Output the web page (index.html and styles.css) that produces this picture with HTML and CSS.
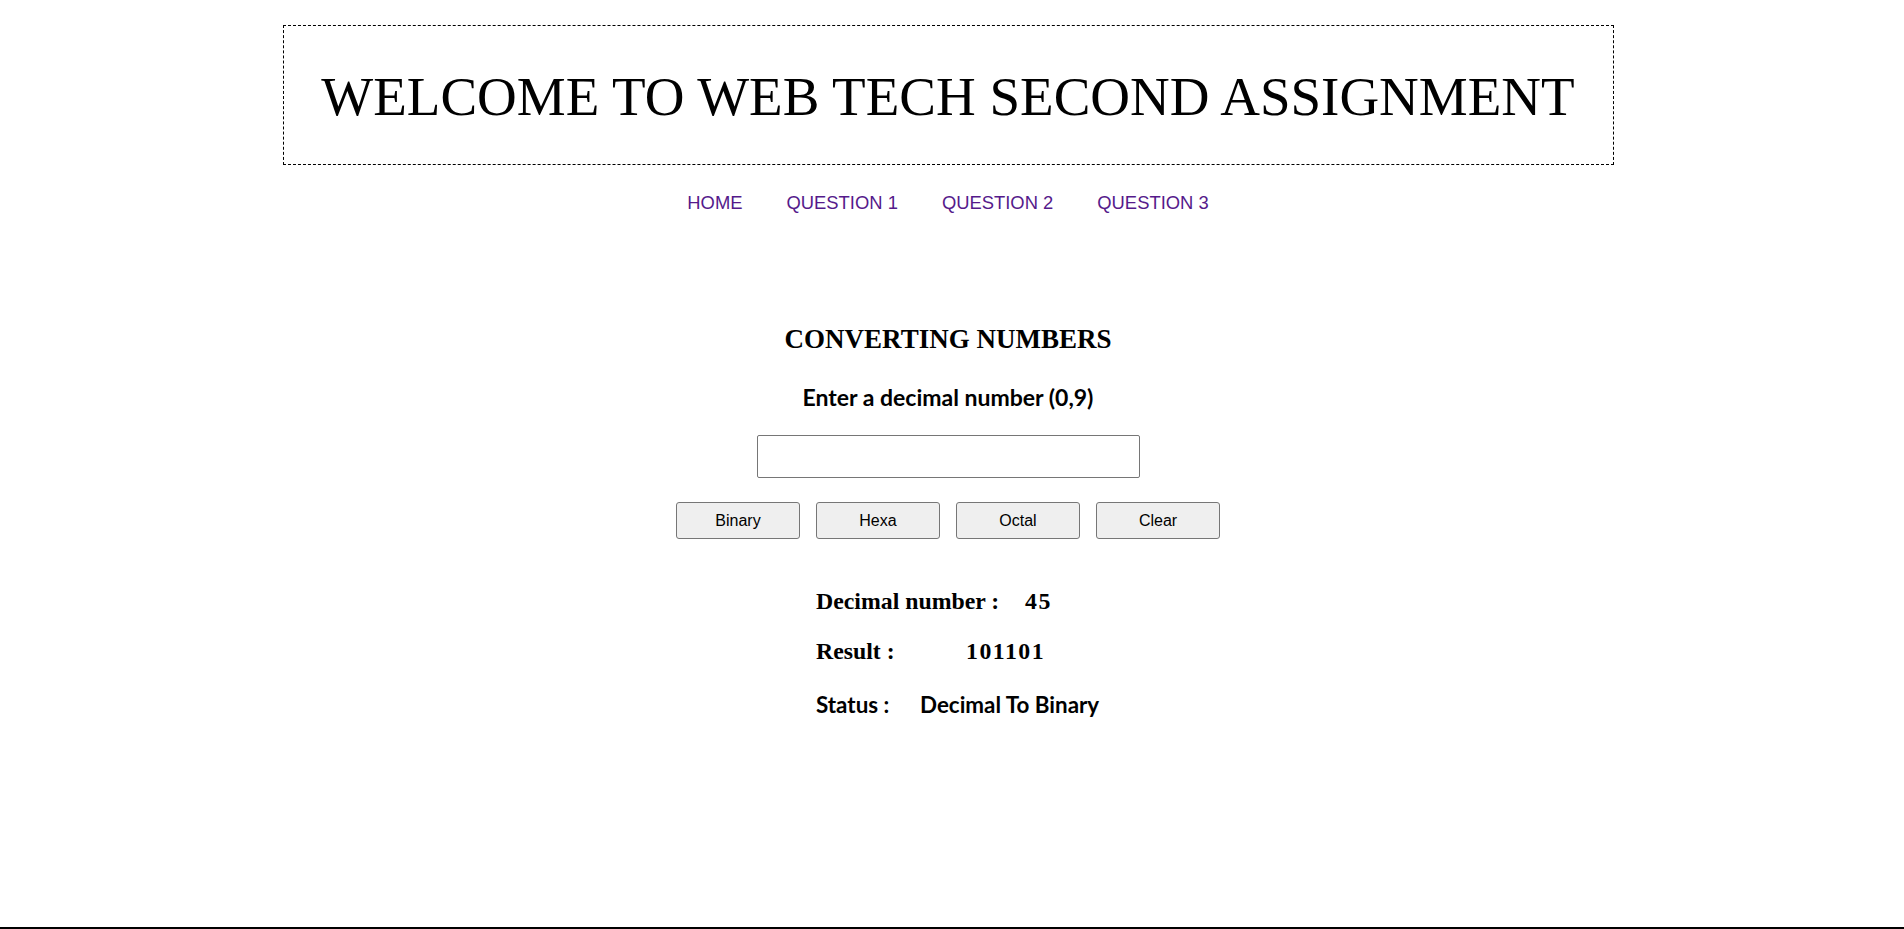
FILE: index.html
```html
<!DOCTYPE html>
<html lang="en">
<head>
<meta charset="utf-8">
<title>Web Tech Second Assignment</title>
<link rel="stylesheet" href="styles.css">
</head>
<body>
<div class="page">
  <header class="title-box">
    <h1 class="title">WELCOME TO WEB TECH SECOND ASSIGNMENT</h1>
  </header>
  <nav class="nav">
    <a href="#" class="nav-link">HOME</a>
    <a href="#" class="nav-link">QUESTION 1</a>
    <a href="#" class="nav-link">QUESTION 2</a>
    <a href="#" class="nav-link">QUESTION 3</a>
  </nav>
  <main class="converter">
    <h2 class="conv-title">CONVERTING NUMBERS</h2>
    <p class="prompt">Enter a decimal number (0,9)</p>
    <input type="text" class="num-input">
    <div class="buttons">
      <button class="btn">Binary</button>
      <button class="btn">Hexa</button>
      <button class="btn">Octal</button>
      <button class="btn">Clear</button>
    </div>
    <div class="results">
      <div class="row row-serif"><span class="lbl lbl-dec">Decimal number :</span><span class="val">45</span></div>
      <div class="row row-serif"><span class="lbl lbl-res">Result :</span><span class="val">101101</span></div>
      <div class="row row-sans"><span class="lbl lbl-status">Status :</span><span class="val-sans">Decimal To Binary</span></div>
    </div>
  </main>
</div>
<footer class="footer"></footer>
</body>
</html>
```
FILE: styles.css
```css
html, body {
  margin: 0;
  padding: 0;
  background: #fff;
  color: #000;
}
body {
  font-family: "Liberation Serif", "Times New Roman", serif;
}
.page {
  padding: 25px 8px 0 0;
}
.title-box {
  box-sizing: border-box;
  width: 1331px;
  height: 140px;
  margin: 0 auto;
  border: 1px dashed #000;
  padding-top: 43px;
  text-align: center;
}
.title {
  margin: 0;
  font-family: "Liberation Serif", serif;
  font-weight: normal;
  font-size: 55px;
  line-height: 55px;
  white-space: nowrap;
}
.nav {
  display: flex;
  justify-content: center;
  gap: 44px;
  margin-top: 27px;
  line-height: 22px;
}
.nav-link {
  font-family: "Liberation Sans", Arial, sans-serif;
  font-size: 18.4px;
  color: #551a8b;
  text-decoration: none;
}
.converter {
  display: flex;
  flex-direction: column;
  align-items: center;
  margin-top: 109px;
}
.conv-title {
  margin: 0;
  font-family: "Liberation Serif", serif;
  font-weight: bold;
  font-size: 27px;
  line-height: 32px;
}
.prompt {
  margin: 30px 0 0;
  font-family: Lato, "Open Sans", sans-serif;
  font-weight: bold;
  font-size: 23px;
  line-height: 24px;
}
.num-input {
  box-sizing: border-box;
  width: 383px;
  height: 43px;
  margin-top: 26px;
  border: 1px solid #767676;
  border-radius: 2px;
  padding: 0 4px;
  font-size: 16px;
  background: #fff;
}
.buttons {
  display: flex;
  gap: 16px;
  margin-top: 24px;
}
.btn {
  box-sizing: border-box;
  width: 124px;
  height: 37px;
  padding: 0;
  border: 1px solid #767676;
  border-radius: 3px;
  background: #efefef;
  color: #000;
  font-family: "Liberation Sans", Arial, sans-serif;
  font-size: 16px;
}
.results {
  width: 264px;
  margin-top: 48px;
  display: flex;
  flex-direction: column;
  gap: 22px;
  white-space: nowrap;
}
.row {
  display: flex;
  line-height: 28px;
  font-weight: bold;
}
.row-serif {
  font-family: "Liberation Serif", serif;
  font-size: 23.8px;
}
.row-sans {
  font-family: Lato, "Open Sans", sans-serif;
  font-size: 22.4px;
  margin-top: 4px;
}
.lbl {
  display: inline-block;
  flex: none;
}
.val {
  letter-spacing: 1.5px;
}
.lbl-dec { width: 209px; }
.lbl-res { width: 150px; }
.lbl-status { width: 104px; }
.footer {
  margin-top: 208px;
  border-top: 3px solid #000;
  height: 40px;
}
```
